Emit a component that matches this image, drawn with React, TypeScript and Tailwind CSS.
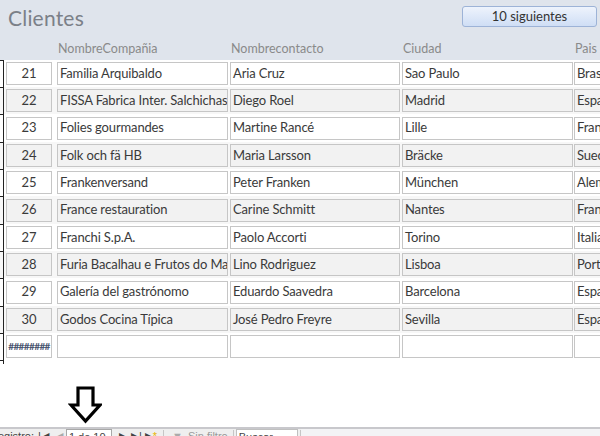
import React from 'react';

const rows = [
  { id: 21, company: 'Familia Arquibaldo', contact: 'Aria Cruz', city: 'Sao Paulo', country: 'Brasil' },
  { id: 22, company: 'FISSA Fabrica Inter. Salchichas S.A.', contact: 'Diego Roel', city: 'Madrid', country: 'España' },
  { id: 23, company: 'Folies gourmandes', contact: 'Martine Rancé', city: 'Lille', country: 'Francia' },
  { id: 24, company: 'Folk och fä HB', contact: 'Maria Larsson', city: 'Bräcke', country: 'Suecia' },
  { id: 25, company: 'Frankenversand', contact: 'Peter Franken', city: 'München', country: 'Alemania' },
  { id: 26, company: 'France restauration', contact: 'Carine Schmitt', city: 'Nantes', country: 'Francia' },
  { id: 27, company: 'Franchi S.p.A.', contact: 'Paolo Accorti', city: 'Torino', country: 'Italia' },
  { id: 28, company: 'Furia Bacalhau e Frutos do Mar', contact: 'Lino Rodriguez', city: 'Lisboa', country: 'Portugal' },
  { id: 29, company: 'Galería del gastrónomo', contact: 'Eduardo Saavedra', city: 'Barcelona', country: 'España' },
  { id: 30, company: 'Godos Cocina Típica', contact: 'José Pedro Freyre', city: 'Sevilla', country: 'España' },
];

const font = { fontFamily: 'Lato, "Liberation Sans", sans-serif' };

function Cell({ children, className, shaded }: { children?: React.ReactNode; className: string; shaded: boolean }) {
  return (
    <div
      className={`h-[23px] border border-[#c6c6c6] overflow-hidden whitespace-nowrap flex items-center px-[2px] text-[13px] tracking-[-0.15px] text-[#3a3a3a] ${
        shaded ? 'bg-[#f2f2f2]' : 'bg-white'
      } ${className}`}
    >
      {children}
    </div>
  );
}

function Row({ r, index }: { r?: (typeof rows)[number]; index: number }) {
  const shaded = index % 2 === 1;
  // every third row is a pixel taller, like the form's 27.3px pitch
  const tall = index % 3 === 2;
  return (
    <div className={`flex items-center ${tall ? 'h-[28px]' : 'h-[27px]'} ${shaded ? 'bg-[#f7f7f7]' : 'bg-white'}`}>
      <div className="w-[4px] h-full border-t border-r border-[#222] shrink-0" />
      <Cell shaded={shaded} className="ml-[2px] w-[46px] shrink-0 justify-center">
        {r ? r.id : <span className="text-[10px] tracking-[-0.6px] text-[#4a5570] font-bold">########</span>}
      </Cell>
      <Cell shaded={shaded} className="ml-[5px] w-[171px] shrink-0">{r?.company}</Cell>
      <Cell shaded={shaded} className="ml-[2px] w-[170px] shrink-0">{r?.contact}</Cell>
      <Cell shaded={shaded} className="ml-[2px] w-[171px] shrink-0">{r?.city}</Cell>
      <Cell shaded={shaded} className="ml-[1px] w-[40px] shrink-0">{r?.country}</Cell>
    </div>
  );
}

export default function App() {
  return (
    <div className="w-[600px] h-[436px] overflow-hidden bg-white flex flex-col" style={font}>
      <div className="h-[60px] bg-[#dfe4ec] shrink-0 flex flex-col">
        <div className="flex items-start justify-between pl-[8px] pr-[3px] pt-[6px] h-[38px]">
          <div className="text-[21px] leading-[24px] text-[#7b8088] tracking-[0.2px]">Clientes</div>
          <button className="w-[135px] h-[21px] rounded-[3px] border border-[#9db3d7] bg-gradient-to-b from-[#eef3fc] to-[#cfdef5] text-[13px] text-[#333] leading-none">
            10 siguientes
          </button>
        </div>
        <div className="flex text-[12.5px] text-[#8a8a8a] h-[22px] items-center">
          <div className="w-[58px] shrink-0" />
          <div className="w-[173px] shrink-0">NombreCompañia</div>
          <div className="w-[172px] shrink-0">Nombrecontacto</div>
          <div className="w-[172px] shrink-0">Ciudad</div>
          <div>Pais</div>
        </div>
      </div>

      <div className="flex flex-col shrink-0">
        {rows.map((r, i) => (
          <Row key={r.id} r={r} index={i} />
        ))}
        <Row index={10} />
        <div className="w-[4px] h-[4px] border-t border-r border-[#222]" />
      </div>

      <div className="h-[63px] shrink-0 relative">
        <svg className="absolute left-[68px] top-[22px]" width="34" height="38" viewBox="0 0 34 38">
          <path d="M10 2 H25 V19 H32 L17.5 35 L3 19 H10 Z" fill="white" stroke="black" strokeWidth="3.2" strokeLinejoin="miter" />
        </svg>
      </div>

      <div className="h-[20px] shrink-0 border-t-2 border-[#c8c8cc] bg-[#f3f3f5] flex items-start text-[11px] leading-[13px] text-[#444]" style={{ fontFamily: '"Liberation Sans", sans-serif' }}>
        <div className="flex items-start bg-[#efefef] h-full pt-[1px]">
          <span className="-ml-[10px]">Registro:</span>
          <span className="ml-[4px]">|◀</span>
          <span className="ml-[6px] text-[#aaa]">◀</span>
          <div className="ml-[3px] -mt-[1px] w-[46px] h-[16px] bg-white border border-[#a8a8a8] px-[2px] leading-[14px] whitespace-nowrap overflow-hidden">1 de 10</div>
          <span className="ml-[7px]">▶</span>
          <span className="ml-[4px]">▶|</span>
          <span className="ml-[3px]">▶<span className="text-[#e8b400]">*</span></span>
          <div className="ml-[6px] w-px h-full bg-[#c6c6c6]" />
          <span className="ml-[8px] text-[#aaa]">▼</span>
          <span className="ml-[5px] text-[#999]">Sin filtro</span>
          <div className="ml-[5px] w-px h-full bg-[#c6c6c6]" />
          <div className="ml-[2px] -mt-[1px] w-[62px] h-[16px] bg-white border border-[#c0c0c0] px-[2px] leading-[14px]">Buscar</div>
          <div className="ml-[2px] w-px h-full bg-[#c6c6c6]" />
        </div>
      </div>
    </div>
  );
}
